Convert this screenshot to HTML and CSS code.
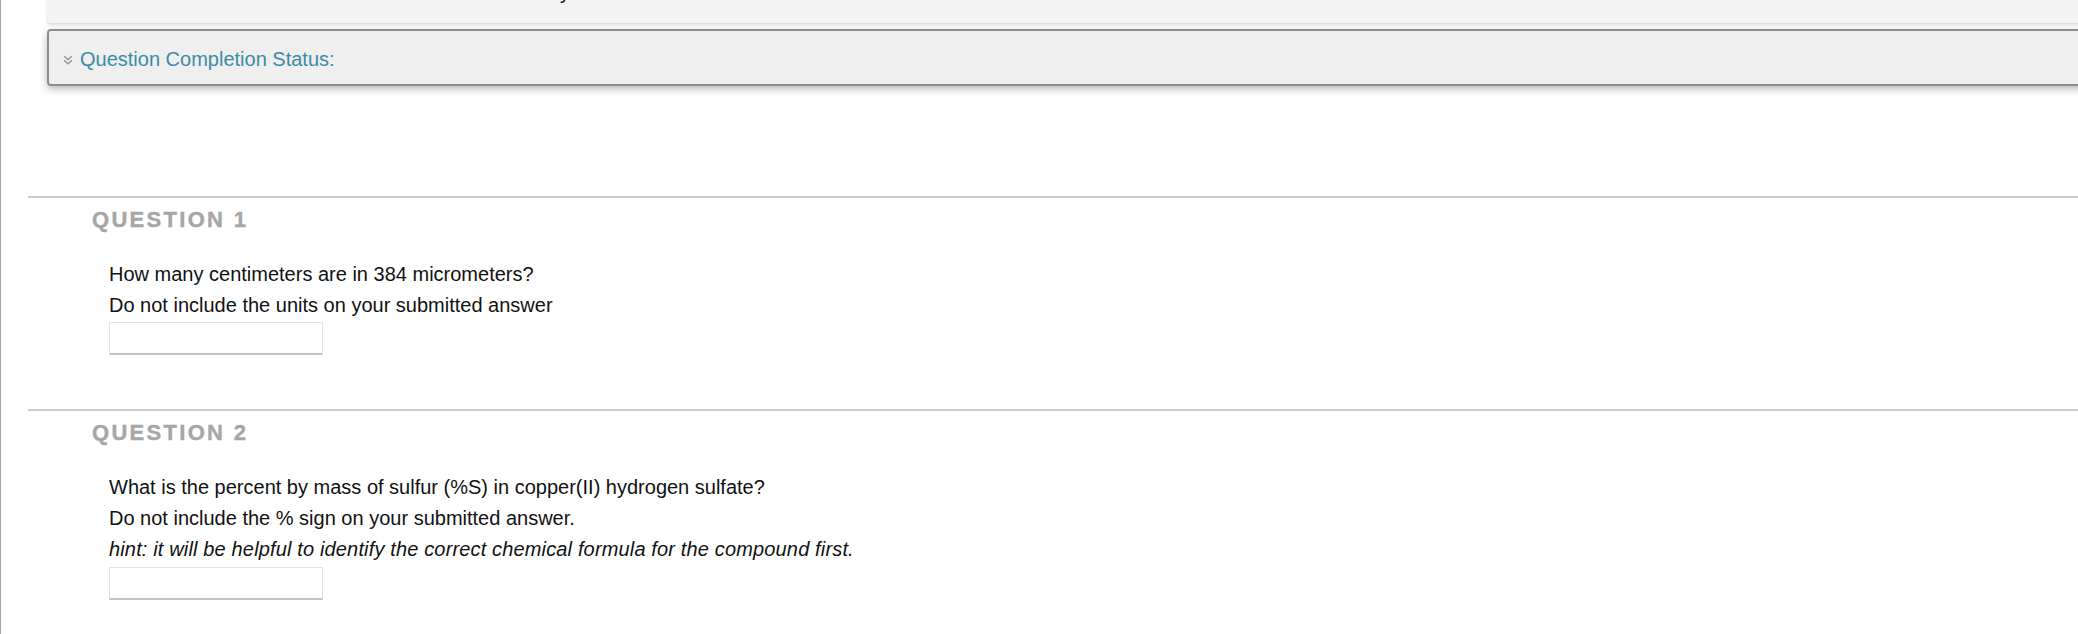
FILE: index.html
```html
<!DOCTYPE html>
<html lang="en">
<head>
<meta charset="utf-8">
<title>Test</title>
<link rel="stylesheet" href="styles.css">
</head>
<body>
<div class="page">
  <div class="info-panel">
    <p class="info-line">Test Information: Due Date Friday</p>
  </div>
  <div class="status-box">
    <svg class="status-chevron" width="10" height="10" viewBox="0 0 10 10" aria-hidden="true">
      <path d="M1.2 1.2 L5 4.6 L8.8 1.2 M1.2 5.4 L5 8.8 L8.8 5.4" fill="none" stroke="#9a9a9a" stroke-width="1.5"/>
    </svg>
    <span class="status-label">Question Completion Status:</span>
  </div>

  <section class="question question-first">
    <h3 class="question-title">QUESTION 1</h3>
    <div class="question-body">
      <p class="q-line">How many centimeters are in 384 micrometers?</p>
      <p class="q-line">Do not include the units on your submitted answer</p>
      <input class="answer" type="text" aria-label="Answer 1">
    </div>
  </section>

  <section class="question">
    <h3 class="question-title">QUESTION 2</h3>
    <div class="question-body">
      <p class="q-line">What is the percent by mass of sulfur (%S) in copper(II) hydrogen sulfate?</p>
      <p class="q-line">Do not include the % sign on your submitted answer.</p>
      <p class="q-line hint">hint: it will be helpful to identify the correct chemical formula for the compound first.</p>
      <input class="answer answer-last" type="text" aria-label="Answer 2">
    </div>
  </section>
</div>
</body>
</html>
```

FILE: styles.css
```css
html, body {
  margin: 0;
  padding: 0;
  background: #ffffff;
  overflow: hidden;
}

body {
  font-family: "Liberation Sans", Arial, Helvetica, sans-serif;
  color: #111111;
}

.page {
  min-height: 634px;
  border-left: 1px solid #a3a3a3;
  padding-left: 27px;
  box-sizing: border-box;
}

.info-panel {
  margin-left: 19px;
  margin-right: -30px;
  height: 24px;
  background: #f4f4f4;
  border-bottom: 1px solid #dedede;
  border-radius: 0 0 4px 4px;
  box-shadow: 0 1px 3px rgba(0, 0, 0, 0.14);
  overflow: hidden;
  box-sizing: border-box;
}

.info-line {
  margin: -23px 0 0 0;
  padding-left: 224px;
  font-size: 20px;
  line-height: 31px;
  white-space: nowrap;
  color: #111111;
}

.status-box {
  margin: 5px -30px 0 19px;
  height: 57px;
  box-sizing: border-box;
  border: 2px solid #8d8d8d;
  border-radius: 4px;
  background: #efefef;
  box-shadow: 0 3px 8px rgba(0, 0, 0, 0.28);
  padding: 14px 14px 10px 14px;
  display: flex;
  align-items: center;
  gap: 7px;
}

.status-chevron {
  flex: none;
  margin-top: 1px;
}

.status-label {
  font-size: 20px;
  line-height: 29px;
  color: #3a8ca5;
}

.question {
  margin-right: -30px;
  border-top: 2px solid #cccccc;
  padding: 9px 0 54px 0;
}

.question-first {
  margin-top: 110px;
}

.question-title {
  margin: 0 0 0 64px;
  font-size: 22px;
  line-height: 26px;
  font-weight: bold;
  letter-spacing: 2.3px;
  color: #a6a6a6;
  -webkit-text-stroke: 0.4px #a6a6a6;
}

.question-body {
  margin: 26px 0 0 81px;
}

.q-line {
  margin: 0;
  font-size: 20px;
  line-height: 31px;
  color: #111111;
}

.hint {
  font-style: italic;
  letter-spacing: 0.15px;
}

.answer {
  display: block;
  margin: 1px 0 0 0;
  width: 214px;
  height: 33px;
  box-sizing: border-box;
  border: 1px solid #e2e2e2;
  border-bottom: 2px solid #c2c2c2;
  border-radius: 1px;
  background: #ffffff;
  padding: 0 6px;
  font-family: "Liberation Sans", Arial, sans-serif;
  font-size: 18px;
  outline: none;
}

.answer-last {
  margin-top: 2px;
}
```
